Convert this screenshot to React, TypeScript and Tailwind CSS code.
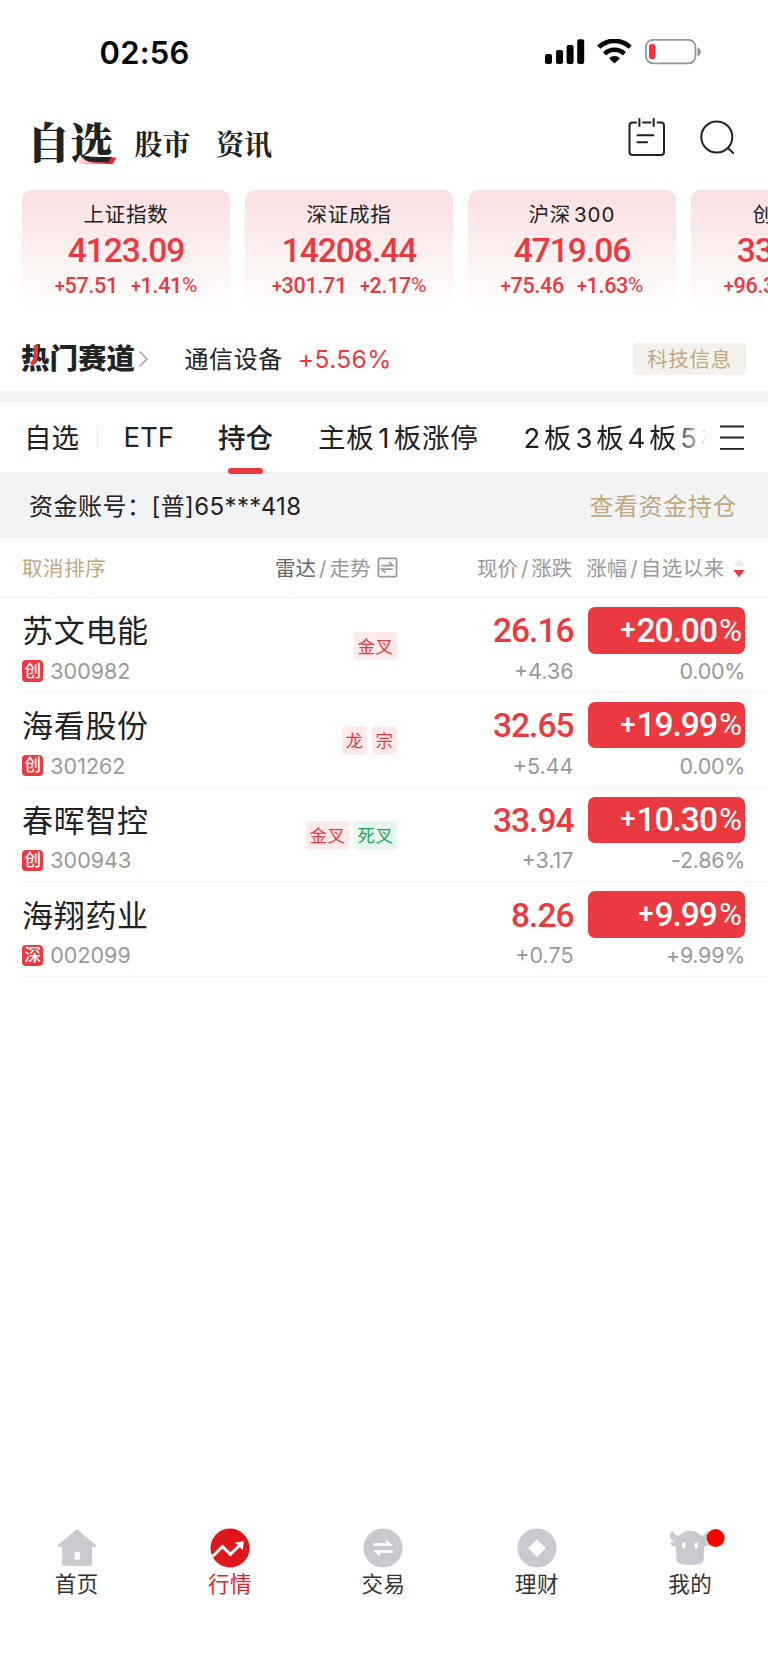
import React from 'react';

const UI = "font-['Inter','Noto_Sans_CJK_SC',sans-serif]";
const NUM = "font-['Roboto','Noto_Sans_CJK_SC',sans-serif]";
const SERIF = "font-['Noto_Serif_CJK_SC','Noto_Sans_CJK_SC',serif]";

type Index = { name: string; suffix?: string; value: string; diff: string; pct: string };
const indices: Index[] = [
  { name: '上证指数', value: '4123.09', diff: '57.51', pct: '1.41' },
  { name: '深证成指', value: '14208.44', diff: '301.71', pct: '2.17' },
  { name: '沪深', suffix: '300', value: '4719.06', diff: '75.46', pct: '1.63' },
  { name: '创业板指', value: '3327.81', diff: '96.32', pct: '2.98' },
];

type Stock = {
  name: string;
  board: string;
  code: string;
  tags: { label: string; green?: boolean }[];
  price: string;
  change: string;
  pct: string;
  since: string;
};
const stocks: Stock[] = [
  { name: '苏文电能', board: '创', code: '300982', tags: [{ label: '金叉' }], price: '26.16', change: '+4.36', pct: '20.00', since: '0.00%' },
  { name: '海看股份', board: '创', code: '301262', tags: [{ label: '龙' }, { label: '宗' }], price: '32.65', change: '+5.44', pct: '19.99', since: '0.00%' },
  { name: '春晖智控', board: '创', code: '300943', tags: [{ label: '金叉' }, { label: '死叉', green: true }], price: '33.94', change: '+3.17', pct: '10.30', since: '-2.86%' },
  { name: '海翔药业', board: '深', code: '002099', tags: [], price: '8.26', change: '+0.75', pct: '9.99', since: '+9.99%' },
];

function StatusBar() {
  return (
    <div className="flex h-[104px] shrink-0 items-center justify-between pr-[66px] pl-[99.500px]">
      <span className="mt-px text-[31px] leading-none font-semibold tracking-[0.2px] text-black">02:56</span>
      <svg width="157" height="26" viewBox="545 39 157 26">
        <g fill="#000">
          <rect x="545" y="54" width="7" height="10" rx="2" />
          <rect x="556" y="50" width="7" height="14" rx="2" />
          <rect x="566.6" y="45" width="7" height="19" rx="2" />
          <rect x="577.2" y="39.3" width="7" height="24.7" rx="2" />
          <path d="M614.5 63.6 609 58.2a8 8 0 0 1 11 0z" />
        </g>
        <g fill="none" stroke="#000" strokeWidth="4.6">
          <path d="M598.8 47.2a22.6 22.6 0 0 1 31.4 0" />
          <path d="M604.6 53.8a14.3 14.3 0 0 1 19.8 0" />
        </g>
        <rect x="645.9" y="39.9" width="49.6" height="23.4" rx="7" fill="none" stroke="#979797" strokeWidth="1.8" />
        <rect x="649" y="44" width="6.4" height="15" rx="2.8" fill="#fb3139" />
        <path d="M697.6 47.6c4.2 1.6 4.2 6.8 0 8.4z" fill="#8e8e8e" />
      </svg>
    </div>
  );
}

function Header() {
  return (
    <div className="flex h-[86px] shrink-0 items-center pr-[32px] pl-[27px] text-[#212323]">
      <div className={`relative mt-[-12px] text-[43px] leading-[46px] font-black ${SERIF}`}>
        <svg className="absolute top-[39px] left-[47px]" width="44" height="8" viewBox="0 0 44 8">
          <defs>
            <linearGradient id="brush" x1="0" x2="1">
              <stop offset="0" stopColor="#ff4a4f" stopOpacity="0" />
              <stop offset="0.8" stopColor="#f5202a" />
            </linearGradient>
          </defs>
          <path d="M6 0.500h36.500l-4 6.500H0z" fill="url(#brush)" />
        </svg>
        <span className="relative">自选</span>
      </div>
      <span className={`mt-[-8px] ml-[21.500px] text-[28px] leading-[30px] font-bold ${SERIF}`}>股市</span>
      <span className={`mt-[-8px] ml-[25.500px] text-[28px] leading-[30px] font-bold ${SERIF}`}>资讯</span>
      <svg className="mt-[-20px] ml-auto" width="38" height="40" viewBox="628 117 38 40" fill="none" stroke="#222" strokeWidth="2" strokeLinecap="round">
        <path d="M636 122.500h-3.500a3 3 0 0 0-3 3V152a3 3 0 0 0 3 3h28.500a3 3 0 0 0 3-3v-26.500a3 3 0 0 0-3-3H657.500M643 122.500h7.500M639.400 119v7M653.700 119v7M637.500 135.300h16M637.500 142.300h9.500" />
      </svg>
      <svg className="mt-[-18px] ml-[34px]" width="36" height="36" viewBox="700 120 36 36" fill="none" stroke="#222" strokeWidth="2" strokeLinecap="round">
        <circle cx="716.8" cy="137" r="15.500" />
        <path d="m728.500 148.500 4.700 4.600" />
      </svg>
    </div>
  );
}

function IndexCards() {
  return (
    <div className="flex h-[120px] shrink-0 gap-[15px] overflow-hidden pl-[22px]">
      {indices.map((it) => (
        <div key={it.name} className="flex w-[208px] shrink-0 flex-col items-center rounded-t-[10px] bg-linear-to-b from-[#fadfe0] to-white pt-[12px]">
          <div className={`flex h-[26px] items-center text-[20.500px] tracking-[0.7px] whitespace-nowrap text-[#222] ${UI}`}>
            {it.name}
            {it.suffix && <span className="ml-[3px] tracking-[1px]">{it.suffix}</span>}
          </div>
          <div className={`mt-[5px] flex h-[36px] items-center text-[33.500px] leading-none font-medium tracking-[-1px] text-[#ea3a40] ${NUM}`}>{it.value}</div>
          <div className={`flex h-[33px] items-center gap-[13px] text-[21.500px] leading-none font-medium tracking-[-0.300px] text-[#ea3a40] ${NUM}`}>
            <span className="flex items-center"><span className="text-[18px]">+</span>{it.diff}</span>
            <span className="flex items-center"><span className="text-[18px]">+</span>{it.pct}<span className="text-[21px] font-normal">%</span></span>
          </div>
        </div>
      ))}
    </div>
  );
}

function HotTrack() {
  return (
    <div className={`flex h-[81px] shrink-0 items-center pr-[22px] pl-[21px] text-[#222] ${UI}`}>
      <div className="relative mt-[17px] text-[28.500px] leading-[30px] font-black">
        热门赛道
        <svg className="absolute top-0 left-0" width="20" height="30" viewBox="0 0 20 30" fill="none" stroke="#ea3a40" strokeWidth="4.200">
          <path d="M15 1v9.500c0 5-1.500 7.500-5 9.500" />
        </svg>
      </div>
      <svg className="mt-[17px] ml-[3px]" width="11" height="18" viewBox="0 0 11 18" fill="none" stroke="#aaa" strokeWidth="1.700">
        <path d="m1.500 1.500 7.500 7.500-7.500 7.500" />
      </svg>
      <span className="mt-[19px] ml-[35.500px] text-[24px] leading-none tracking-[0.600px]">通信设备</span>
      <span className="mt-[18px] ml-[15px] text-[24.500px] leading-none tracking-[0.400px] text-[#ea3a40]">+5.56%</span>
      <span className="mt-[17px] ml-auto flex h-[32px] w-[113px] items-center justify-center rounded-[4px] bg-[#f4f1ec] pt-[2px] text-[20.500px] tracking-[0.700px] text-[#c2a882]">科技信息</span>
    </div>
  );
}

function Tabs() {
  return (
    <div className={`relative flex h-[71px] shrink-0 items-center border-b border-[#ececee] pl-[24px] text-[27.500px] whitespace-nowrap text-[#222] ${UI}`}>
      <span className="pt-[3px]">自选</span>
      <span className="ml-[18px] h-[23px] w-px bg-[#ececee]" />
      <span className="ml-[25.500px] pt-[2px]">ETF</span>
      <span className="relative ml-[44px] flex h-full items-center pt-[3px] font-medium">
        持仓
        <span className="absolute bottom-[-2px] left-[10px] h-[6px] w-[35px] rounded-[3px] bg-[#ea3a40]" />
      </span>
      <span className="ml-[45px] pt-[3px] tracking-[0.800px]">主板<span className="mx-[3.500px]">1</span>板涨停</span>
      <span className="ml-[45px] w-[182px] overflow-hidden mask-r-from-[150px] mask-r-to-[184px] pt-[3px]">
        <span className="flex gap-[3.800px]">
          <span>2</span><span>板</span><span>3</span><span>板</span><span>4</span><span>板</span><span>5</span><span>板</span>
        </span>
      </span>
      <svg className="absolute top-[22px] left-[719px]" width="26" height="27" viewBox="0 0 26 27" stroke="#222" strokeWidth="1.800">
        <path d="M1 2.500h24M1 13.500h24M1 24.800h24" />
      </svg>
    </div>
  );
}

function ListHeader() {
  return (
    <div className={`flex h-[60px] shrink-0 items-center border-b border-[#f3f3f4] pt-[4px] pl-[22px] text-[20.500px] whitespace-nowrap text-[#999] ${UI}`}>
      <span className="w-[253px] tracking-[0.600px] text-[#c2a77f]">取消排序</span>
      <span className="text-[#666]">雷达</span>
      <span className="mx-[3px]">/</span>
      <span>走势</span>
      <svg className="mt-[-4px] ml-[7px]" width="21" height="21" viewBox="0 0 22 22" fill="none" stroke="#999" strokeWidth="1.800">
        <rect x="1.500" y="1.500" width="19" height="19" rx="1.500" />
        <path d="M5 9h11.500l-4-3.500M16.500 12.800H5l4 3.500" />
      </svg>
      <span className="ml-[78.500px]">现价</span>
      <span className="mx-[3px]">/</span>
      <span>涨跌</span>
      <span className="ml-[14px]">涨幅</span>
      <span className="mx-[3px]">/</span>
      <span className="tracking-[0.500px]">自选以来</span>
      <svg className="mt-[-3px] ml-[8px]" width="12" height="20" viewBox="0 0 12 20">
        <path d="M6 0.500 11.500 8H0.500z" fill="#ececec" />
        <path d="M6 19.500 11.500 12H0.500z" fill="#ea3a40" />
      </svg>
    </div>
  );
}

function StockRow({ s }: { s: Stock }) {
  return (
    <div className={`ml-[22px] flex h-[94.750px] shrink-0 border-b border-[#f3f3f4] ${UI}`}>
      <div className="w-[200px]">
        <div className="mt-[14.500px] flex h-[38px] items-center text-[31px] tracking-[0.700px] whitespace-nowrap text-[#222]">{s.name}</div>
        <div className="mt-[9.500px] flex h-[22px] items-center">
          <span className="flex size-[21.300px] items-center justify-center rounded-[4px] bg-[#ea3a40] text-[16.500px] leading-none font-medium text-white">{s.board}</span>
          <span className="mt-px ml-[7px] text-[21.500px] leading-none text-[#999]">{s.code}</span>
        </div>
      </div>
      <div className="mt-[33.500px] flex w-[175px] justify-end gap-[5px]">
        {s.tags.map((t) => (
          <span
            key={t.label}
            className={`flex h-[28.500px] items-center justify-center rounded-[4px] px-[3.500px] pt-px text-[17.500px] leading-none tracking-[0.500px] ${t.green ? 'bg-[#e7f6ee] text-[#1aa65b]' : 'bg-[#fdebec] text-[#ea3a40]'}`}
          >
            {t.label}
          </span>
        ))}
      </div>
      <div className="flex w-[176.500px] flex-col items-end">
        <div className={`mt-[14px] flex h-[38px] items-center text-[33.500px] leading-none font-medium tracking-[-1px] text-[#ea3a40] ${NUM}`}>{s.price}</div>
        <div className="mt-[10.500px] flex h-[22px] items-center text-[21.500px] leading-none text-[#999]">{s.change}</div>
      </div>
      <div className="ml-[14.500px] flex w-[157px] flex-col items-end">
        <div className={`mt-[9px] flex h-[46.500px] w-full items-center justify-end rounded-[7px] bg-[#ea3a40] pr-[4px] text-[33.500px] leading-none font-medium tracking-[-1px] text-white ${NUM}`}>
          <span className="mr-[2px] text-[27px]">+</span>
          {s.pct}
          <span className="ml-[2px] text-[31.500px] font-normal">%</span>
        </div>
        <div className="mt-[7px] flex h-[22px] items-center text-[21.500px] leading-none tracking-[-0.300px] text-[#999]">{s.since}</div>
      </div>
    </div>
  );
}

const navItems: { label: string; active?: boolean; icon: React.ReactNode }[] = [
  {
    label: '首页',
    icon: (
      <path fillRule="evenodd" fill="#c9cad0" d="M20 1.200 1.600 16.500c-1.200 1.200-.6 2.500.8 2.500h2.800v18.700h29.800V19h2.600c1.400 0 2-1.300.8-2.500zM17.500 24h5.500v7.600h-5.500z" />
    ),
  },
  {
    label: '行情',
    active: true,
    icon: (
      <>
        <circle cx="20" cy="20" r="19.500" fill="#df171b" />
        <path d="M2.500 28.500 12.500 18.500 20.300 26.300 30 17" fill="none" stroke="#fff" strokeWidth="3" />
        <path d="m25 14.500 8.800-1.200-1 8.600z" fill="#fff" />
      </>
    ),
  },
  {
    label: '交易',
    icon: (
      <>
        <circle cx="20" cy="20" r="19.500" fill="#c9cad0" />
        <path d="M10 15.200h13v-3.700l7.200 6.300H10zM30 22.200H9.800l7.200 6.300v-3.700h13z" fill="#fff" />
      </>
    ),
  },
  {
    label: '理财',
    icon: (
      <>
        <circle cx="20" cy="20" r="19.500" fill="#c9cad0" />
        <path d="m20 11.500 8.800 8.700L20 29l-8.800-8.800z" fill="#fff" />
      </>
    ),
  },
  {
    label: '我的',
    icon: (
      <>
        <path
          fill="#c9cad0"
          d="M20 3c-5 0-8 1.300-9.500 3.800C7.500 8.500 4 7 3 3-.8 4.500-1.300 9 2.200 12.200L5 14l-5 .8c1 3 3 3.600 5.500 3.300.3 4.500.9 7 1 10.500C4.300 34.500 10 37 20 37s15.700-2.500 13.500-8.400c.1-3.500.7-6 1-10.500 2.500.3 4.500-.3 5.500-3.300l-5-.8 2.800-1.800C41.300 9 40.800 4.500 37 3c-1 4-4.500 5.500-7.500 3.800C28 4.300 25 3 20 3z"
        />
        <ellipse cx="13.600" cy="17.500" rx="1.700" ry="3.200" fill="#fff" />
        <ellipse cx="26.300" cy="17.500" rx="1.700" ry="3.200" fill="#fff" />
        <circle cx="45.600" cy="10" r="9" fill="#fe0000" />
      </>
    ),
  },
];

function BottomNav() {
  return (
    <div className={`mt-auto grid h-[137.500px] shrink-0 grid-cols-5 pr-[1px] ${UI}`}>
      {navItems.map((n) => (
        <div key={n.label} className="flex flex-col items-center">
          <svg className="overflow-visible" width="40" height="40" viewBox="0 0 40 40">{n.icon}</svg>
          <span className={`mt-[3px] text-[21.500px] leading-[26px] tracking-[0.500px] ${n.active ? 'text-[#e3242b]' : 'text-[#333]'}`}>{n.label}</span>
        </div>
      ))}
    </div>
  );
}

export default function App() {
  return (
    <div className={`flex h-[1665px] w-[768px] flex-col overflow-hidden bg-white ${UI}`}>
      <StatusBar />
      <Header />
      <IndexCards />
      <HotTrack />
      <div className="h-[11px] shrink-0 bg-[#f2f3f5]" />
      <Tabs />
      <div className={`flex h-[65px] shrink-0 items-center justify-between bg-[#f2f3f5] pt-[2px] pr-[31px] pl-[29px] text-[24px] text-[#222] ${UI}`}>
        <span className="tracking-[0.500px]">资金账号：<span className="tracking-[0.400px]">[普]65***418</span></span>
        <span className="tracking-[0.600px] text-[#c2a77f]">查看资金持仓</span>
      </div>
      <ListHeader />
      {stocks.map((s) => (
        <StockRow key={s.code} s={s} />
      ))}
      <BottomNav />
    </div>
  );
}
